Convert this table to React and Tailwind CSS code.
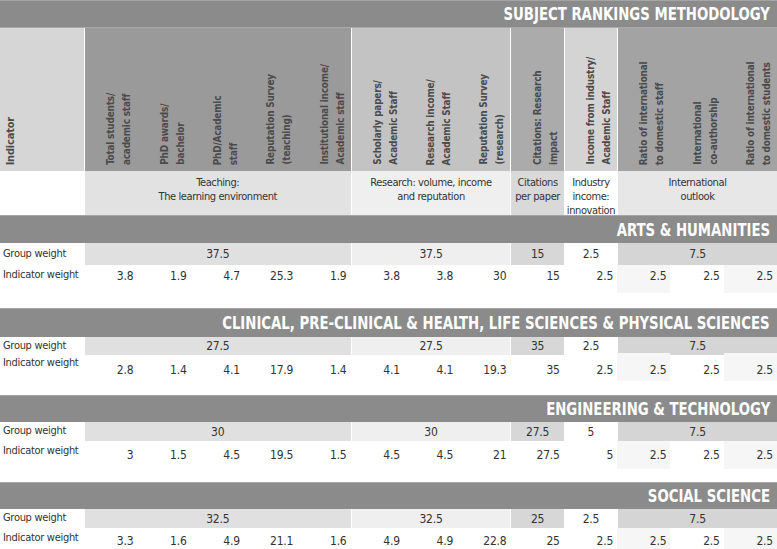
import React from 'react';

const FONT = "[font-family:'DejaVu_Sans_Condensed','DejaVu_Sans','Liberation_Sans',sans-serif] [font-stretch:condensed]";

const headers = [
  ['Total students/', 'academic staff'],
  ['PhD awards/', 'bachelor'],
  ['PhD/Academic', 'staff'],
  ['Reputation Survey', '(teaching)'],
  ['Institutional income/', 'Academic staff'],
  ['Scholarly papers/', 'Academic Staff'],
  ['Research income/', 'Academic Staff'],
  ['Reputation Survey', '(research)'],
  ['Citations: Research', 'impact'],
  ['Income from industry/', 'Academic Staff'],
  ['Ratio of international', 'to domestic staff'],
  ['International', 'co-authorship'],
  ['Ratio of international', 'to domestic students'],
];

// header background per column, and first column of each group gets a white rule
const headBg = [
  'bg-[#9a9a9a]', 'bg-[#9a9a9a]', 'bg-[#9a9a9a]', 'bg-[#9a9a9a]', 'bg-[#9a9a9a]',
  'bg-[#c3c3c3]', 'bg-[#c3c3c3]', 'bg-[#c3c3c3]',
  'bg-[#ababab]',
  'bg-[#d4d4d4]',
  'bg-[#a3a3a3]', 'bg-[#a3a3a3]', 'bg-[#a3a3a3]',
];
const groupStart = [0, 5, 8, 9, 10];

const groups = [
  { span: 'col-span-5', label: ['Teaching:', 'The learning environment'], labelBg: 'bg-[#e2e2e2]', gwBg: 'bg-[#e0e0e0]' },
  { span: 'col-span-3', label: ['Research: volume, income', 'and reputation'], labelBg: 'bg-[#efefef]', gwBg: 'bg-[#efefef]' },
  { span: 'col-span-1', label: ['Citations', 'per paper'], labelBg: 'bg-[#d9d9d9]', gwBg: 'bg-[#d7d7d7]' },
  { span: 'col-span-1', label: ['Industry', 'income:', 'innovation'], labelBg: 'bg-white', gwBg: 'bg-white' },
  { span: 'col-span-3', label: ['International', 'outlook'], labelBg: 'bg-[#e7e7e7]', gwBg: 'bg-[#d5d5d5]' },
];

const sections = [
  {
    title: 'ARTS & HUMANITIES',
    bar: 'h-[28px]', gw: 'h-[22px]', iw: 'h-[43px]', numPad: 'pt-[5px]',
    gwv: ['37.5', '37.5', '15', '2.5', '7.5'],
    iwv: ['3.8', '1.9', '4.7', '25.3', '1.9', '3.8', '3.8', '30', '15', '2.5', '2.5', '2.5', '2.5'],
  },
  {
    title: 'CLINICAL, PRE-CLINICAL & HEALTH, LIFE SCIENCES & PHYSICAL SCIENCES',
    bar: 'h-[29px]', gw: 'h-[16px]', iw: 'h-[42px]', numPad: 'pt-[11px]',
    gwv: ['27.5', '27.5', '35', '2.5', '7.5'],
    iwv: ['2.8', '1.4', '4.1', '17.9', '1.4', '4.1', '4.1', '19.3', '35', '2.5', '2.5', '2.5', '2.5'],
  },
  {
    title: 'ENGINEERING & TECHNOLOGY',
    bar: 'h-[27px]', gw: 'h-[19px]', iw: 'h-[41px]', numPad: 'pt-[8px]',
    gwv: ['30', '30', '27.5', '5', '7.5'],
    iwv: ['3', '1.5', '4.5', '19.5', '1.5', '4.5', '4.5', '21', '27.5', '5', '2.5', '2.5', '2.5'],
  },
  {
    title: 'SOCIAL SCIENCE',
    bar: 'h-[27px]', gw: 'h-[19px]', iw: 'h-[21px]', numPad: 'pt-[7px]',
    gwv: ['32.5', '32.5', '25', '2.5', '7.5'],
    iwv: ['3.3', '1.6', '4.9', '21.1', '1.6', '4.9', '4.9', '22.8', '25', '2.5', '2.5', '2.5', '2.5'],
  },
];

const GRID = 'grid grid-cols-[84px_repeat(13,minmax(0,1fr))]';

const Bar = ({ title, h }) => (
  <div className={`${h} bg-[#8b8b8b] border-t border-[#a5a5a5] flex items-center justify-end pr-[7px]`}>
    <span className="text-white font-bold text-[18px] leading-none whitespace-nowrap origin-right scale-x-[0.82]">{title}</span>
  </div>
);

const Section = ({ s }) => (
  <div>
    <Bar title={s.title} h={s.bar} />
    <div className={`${GRID} ${s.gw} text-[#333]`}>
      <div className="flex items-center pl-[3px] bg-white text-[11px] tracking-[-0.3px] whitespace-nowrap">Group weight</div>
      {groups.map((g, i) => (
        <div key={i} className={`${g.span} ${g.gwBg} border-l border-white flex items-center justify-center text-[12px] tracking-[-0.2px]`}>
          {s.gwv[i]}
        </div>
      ))}
    </div>
    <div className={`${GRID} ${s.iw} text-[#333] overflow-hidden`}>
      <div className="pl-[3px] pt-[2px] leading-[16px] text-[11px] tracking-[-0.3px] whitespace-nowrap">Indicator weight</div>
      {s.iwv.map((v, i) => (
        <div key={i} className="relative">
          {(i === 10 || i === 12) && <div className="absolute inset-x-0 top-0 h-[28px] bg-[#f6f6f6]" />}
          <div className={`relative text-right pr-[4px] leading-[13px] text-[12px] tracking-[-0.2px] ${s.numPad}`}>{v}</div>
        </div>
      ))}
    </div>
  </div>
);

export default function App() {
  return (
    <div className={`w-[777px] h-[549px] overflow-hidden bg-white ${FONT}`}>
      <Bar title="SUBJECT RANKINGS METHODOLOGY" h="h-[27px]" />

      {/* rotated column heads */}
      <div className={`${GRID} h-[144px] border-t border-[#a8a8a8]`}>
        <div className="bg-[#d6d6d6] flex items-end pl-[3px] pb-[6px]">
          <span className="[writing-mode:vertical-rl] rotate-180 font-bold text-[11px] leading-[15px] tracking-[-0.2px] text-[#4a4a4a]">Indicator</span>
        </div>
        {headers.map((lines, i) => (
          <div
            key={i}
            className={`${headBg[i]} ${groupStart.includes(i) ? 'border-l border-white' : ''} flex items-end justify-end pr-[2px] pb-[6px]`}
          >
            <div className="origin-bottom scale-y-[0.9]">
              <span className="block [writing-mode:vertical-rl] rotate-180 font-bold text-[11px] leading-[16px] tracking-[-0.2px] text-[#4a4a4a] whitespace-nowrap">
                {lines[0]}
                <br />
                {lines[1]}
              </span>
            </div>
          </div>
        ))}
      </div>

      {/* group labels */}
      <div className={`${GRID} h-[44px] text-[11px] tracking-[-0.4px] text-[#333]`}>
        <div className="bg-white" />
        {groups.map((g, i) => (
          <div key={i} className={`${g.span} ${g.labelBg} border-l border-white text-center pt-[5px] leading-[14px] overflow-hidden whitespace-nowrap`}>
            {g.label.map((l, j) => (
              <div key={j}>{l}</div>
            ))}
          </div>
        ))}
      </div>

      {sections.map((s, i) => (
        <Section key={i} s={s} />
      ))}
    </div>
  );
}
